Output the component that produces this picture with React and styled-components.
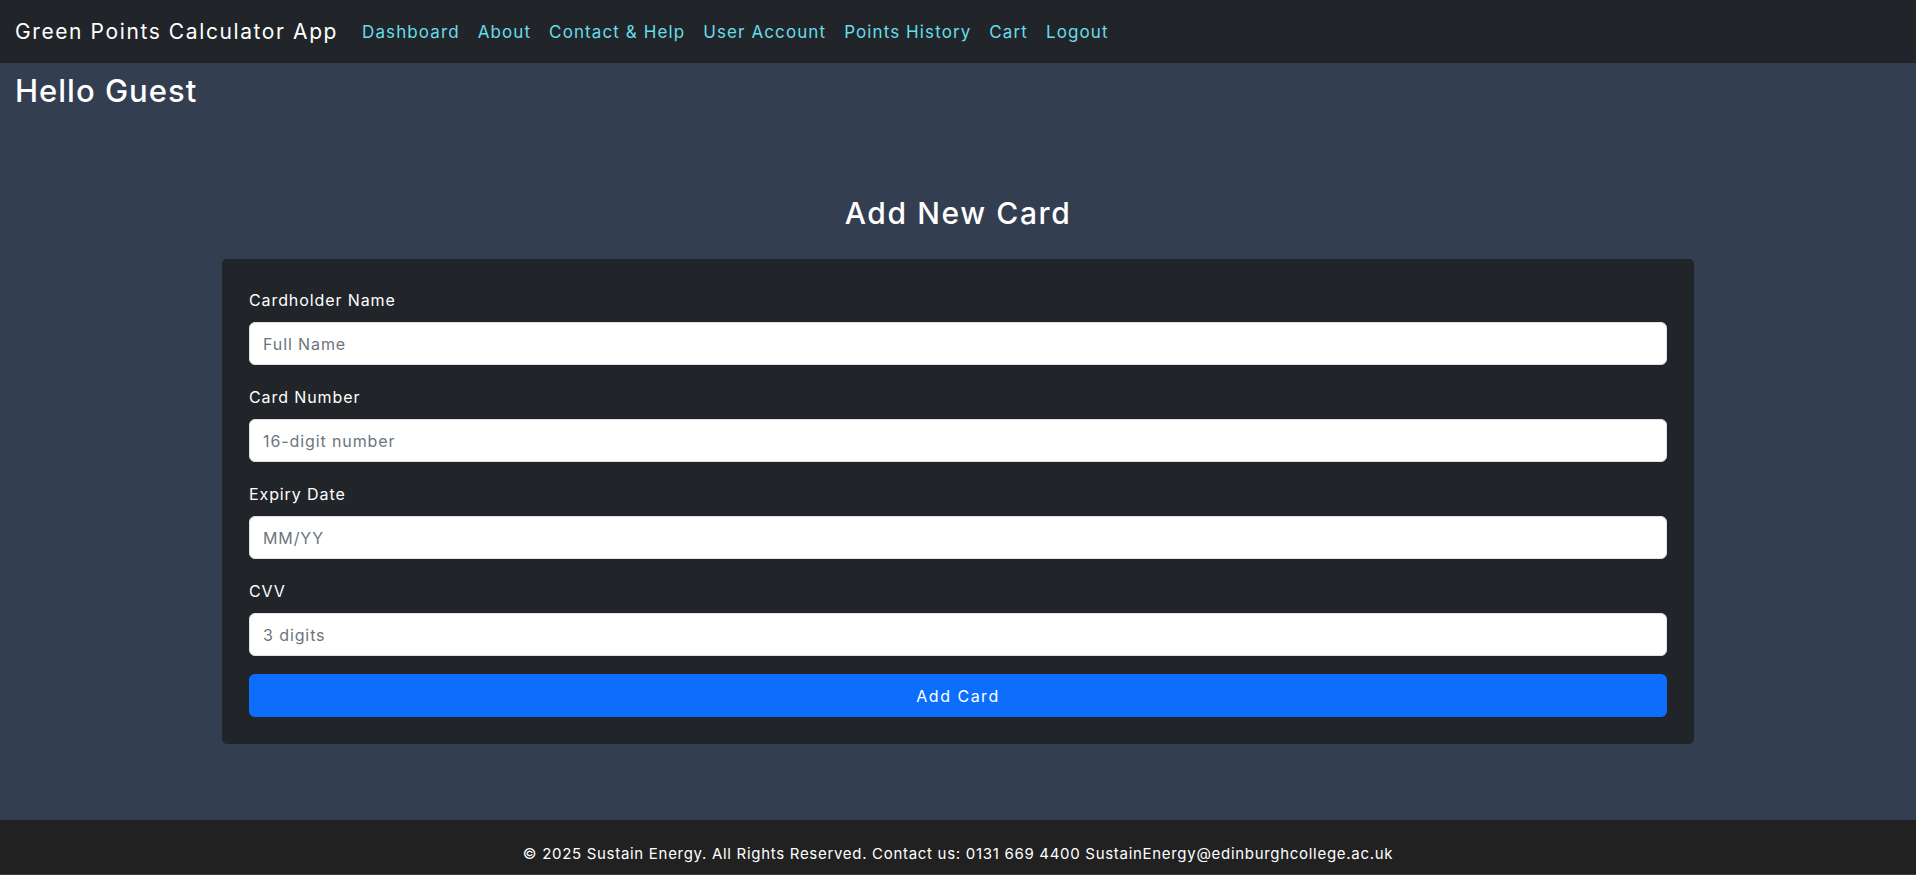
import React from 'react';
import styled, { createGlobalStyle } from 'styled-components';

const GlobalStyle = createGlobalStyle`
  html, body {
    margin: 0;
    padding: 0;
    background: #343e51;
    font-family: Inter, 'Noto Sans', sans-serif;
    color: #fff;
  }
  * {
    box-sizing: border-box;
  }
`;

const Page = styled.div`
  display: flex;
  flex-direction: column;
`;

const Nav = styled.nav`
  height: 63px;
  background: #212529;
  display: flex;
  align-items: center;
  padding: 0 15px;
`;

const Brand = styled.a`
  font-size: 21px;
  letter-spacing: 1.6px;
  color: #fff;
  text-decoration: none;
  margin-right: 24px;
`;

const NavList = styled.ul`
  display: flex;
  list-style: none;
  margin: 0;
  padding: 0;
  gap: 18px;
`;

const NavLink = styled.a`
  font-size: 17px;
  letter-spacing: 1.1px;
  color: #67dde9;
  text-decoration: none;
  &:hover {
    color: #fff;
  }
`;

const Greeting = styled.h2`
  margin: 0;
  padding: 9px 15px 0;
  font-size: 31px;
  letter-spacing: 1px;
  font-weight: 500;
  line-height: 1.2;
`;

const Main = styled.main`
  display: flex;
  flex-direction: column;
  align-items: center;
  padding: 86px 0 76px;
`;

const Title = styled.h3`
  margin: 0 0 28px;
  font-size: 30px;
  letter-spacing: 1.6px;
  font-weight: 500;
  line-height: 36px;
`;

const Card = styled.form`
  width: 1472px;
  background: #212529;
  border-radius: 5px;
  padding: 29px 27px 27px;
  display: flex;
  flex-direction: column;
  gap: 20px;
`;

const Field = styled.div`
  display: flex;
  flex-direction: column;
  gap: 10px;
`;

const Label = styled.label`
  font-size: 16px;
  letter-spacing: 0.9px;
  line-height: 24px;
  color: #fff;
`;

const Input = styled.input`
  height: 43px;
  border: 1px solid #dee2e6;
  border-radius: 6px;
  padding: 0 13px;
  font-family: inherit;
  font-size: 16px;
  letter-spacing: 0.9px;
  color: #212529;
  background: #fff;
  outline: none;
  &::placeholder {
    color: #6c757d;
  }
`;

const SubmitButton = styled.button`
  height: 43px;
  margin-top: -2px;
  border: none;
  border-radius: 6px;
  background: #0d6efd;
  color: #fff;
  font-family: inherit;
  font-size: 16px;
  letter-spacing: 1.5px;
  cursor: pointer;
`;

const Footer = styled.footer`
  background: #212121;
  text-align: center;
  padding: 23px 0 9px;
  font-size: 15px;
  letter-spacing: 0.7px;
  line-height: 22px;
  color: #fff;
`;

const links = ['Dashboard', 'About', 'Contact & Help', 'User Account', 'Points History', 'Cart', 'Logout'];

const fields = [
  { label: 'Cardholder Name', placeholder: 'Full Name' },
  { label: 'Card Number', placeholder: '16-digit number' },
  { label: 'Expiry Date', placeholder: 'MM/YY' },
  { label: 'CVV', placeholder: '3 digits' },
];

const App = () => {
  return (
    <Page>
      <GlobalStyle />
      <Nav>
        <Brand href="#">Green Points Calculator App</Brand>
        <NavList>
          {links.map((l) => (
            <li key={l}>
              <NavLink href="#">{l}</NavLink>
            </li>
          ))}
        </NavList>
      </Nav>
      <Greeting>Hello Guest</Greeting>
      <Main>
        <Title>Add New Card</Title>
        <Card onSubmit={(e) => e.preventDefault()}>
          {fields.map((f) => (
            <Field key={f.label}>
              <Label>{f.label}</Label>
              <Input type="text" placeholder={f.placeholder} />
            </Field>
          ))}
          <SubmitButton type="submit">Add Card</SubmitButton>
        </Card>
      </Main>
      <Footer>
        © 2025 Sustain Energy. All Rights Reserved. Contact us: 0131 669 4400 SustainEnergy@edinburghcollege.ac.uk
      </Footer>
    </Page>
  );
};

export default App;
